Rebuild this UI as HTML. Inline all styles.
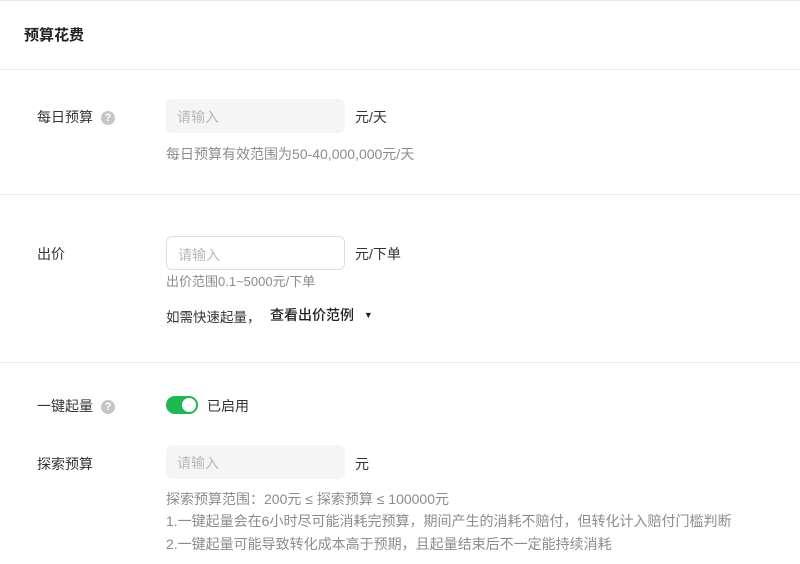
<!DOCTYPE html>
<html><head><meta charset="utf-8"><style>
*{margin:0;padding:0;box-sizing:border-box}
body{width:800px;height:564px;background:#fff;font-family:"Liberation Sans","Noto Sans CJK SC",sans-serif;color:#333;position:relative;overflow:hidden}
.a{position:absolute;white-space:nowrap}
.hr{position:absolute;left:0;width:800px;height:1px;background:#ececec}
.lbl{font-size:14px;color:#333}
.inp{position:absolute;left:166px;width:179px;height:34px;border-radius:6px;background:#f5f5f5;font-size:14px;color:#b8b8b8;padding:8px 11px}
.q{display:inline-block;width:14px;height:14px;border-radius:50%;background:#c6c6c6;color:#fff;font-size:11px;font-weight:bold;text-align:center;line-height:14px;vertical-align:1px;margin-left:8px}
.g{font-size:14px;color:#8c8c8c}
</style></head><body>
<div class="hr" style="top:0;background:#e8e8e8"></div>
<div class="a" style="left:24px;top:24px;font-size:15px;font-weight:bold;color:#222">预算花费</div>
<div class="hr" style="top:69px"></div>

<div class="a lbl" style="left:37px;top:107px">每日预算<span class="q">?</span></div>
<div class="inp" style="top:99px">请输入</div>
<div class="a lbl" style="left:355px;top:107px">元/天</div>
<div class="a g" style="left:166px;top:144px">每日预算有效范围为50-40,000,000元/天</div>
<div class="hr" style="top:194px"></div>

<div class="a lbl" style="left:37px;top:244px">出价</div>
<div class="inp" style="top:236px;background:#fff;border:1px solid #ddd">请输入</div>
<div class="a lbl" style="left:355px;top:244px">元/下单</div>
<div class="a" style="left:166px;top:271px;font-size:13px;color:#8c8c8c">出价范围0.1~5000元/下单</div>
<div class="a" style="left:166px;top:306px;font-size:13.5px;color:#333">如需快速起量，</div>
<div class="a" style="left:270px;top:305px;font-size:14px;color:#222;font-weight:500">查看出价范例 <span style="font-size:9px;margin-left:6px;vertical-align:2px">▼</span></div>
<div class="hr" style="top:362px"></div>

<div class="a lbl" style="left:37px;top:396px">一键起量<span class="q">?</span></div>
<div class="a" style="left:166px;top:396px;width:32px;height:18px;border-radius:9px;background:#1fb954"><div style="position:absolute;right:2px;top:2px;width:14px;height:14px;border-radius:50%;background:#fff"></div></div>
<div class="a lbl" style="left:207px;top:396px">已启用</div>

<div class="a lbl" style="left:37px;top:454px">探索预算</div>
<div class="inp" style="top:445px">请输入</div>
<div class="a lbl" style="left:355px;top:454px">元</div>
<div class="a g" style="left:166px;top:489px">探索预算范围：200元 ≤ 探索预算 ≤ 100000元</div>
<div class="a g" style="left:166px;top:511px">1.一键起量会在6小时尽可能消耗完预算，期间产生的消耗不赔付，但转化计入赔付门槛判断</div>
<div class="a g" style="left:166px;top:534px">2.一键起量可能导致转化成本高于预期，且起量结束后不一定能持续消耗</div>
</body></html>
